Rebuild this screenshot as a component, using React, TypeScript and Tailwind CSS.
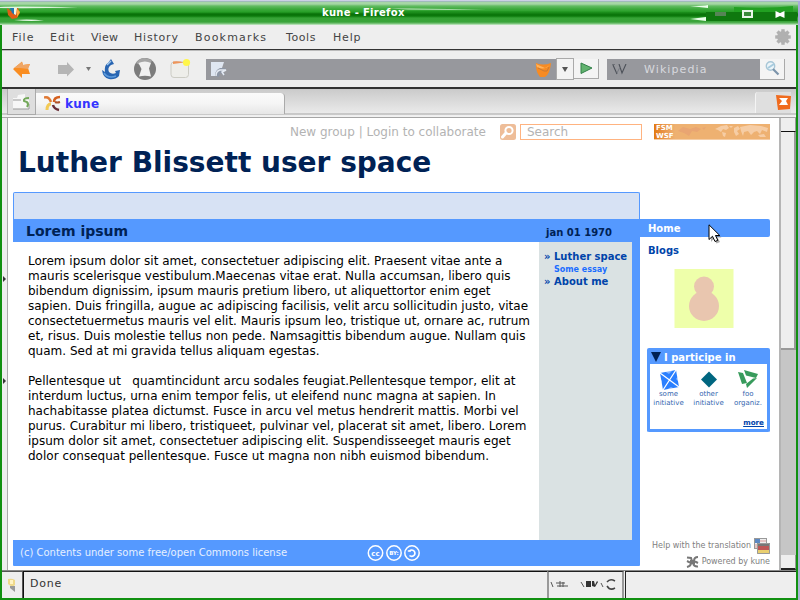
import React from "react";

const paragraphs: string[][] = [
  [
    "Lorem ipsum dolor sit amet, consectetuer adipiscing elit. Praesent vitae ante a",
    "mauris scelerisque vestibulum.Maecenas vitae erat. Nulla accumsan, libero quis",
    "bibendum dignissim, ipsum mauris pretium libero, ut aliquettortor enim eget",
    "sapien. Duis fringilla, augue ac adipiscing facilisis, velit arcu sollicitudin justo, vitae",
    "consectetuermetus mauris vel elit. Mauris ipsum leo, tristique ut, ornare ac, rutrum",
    "et, risus. Duis molestie tellus non pede. Namsagittis bibendum augue. Nullam quis",
    "quam. Sed at mi gravida tellus aliquam egestas.",
  ],
  [
    "Pellentesque ut   quamtincidunt arcu sodales feugiat.Pellentesque tempor, elit at",
    "interdum luctus, urna enim tempor felis, ut eleifend nunc magna at sapien. In",
    "hachabitasse platea dictumst. Fusce in arcu vel metus hendrerit mattis. Morbi vel",
    "purus. Curabitur mi libero, tristiqueet, pulvinar vel, placerat sit amet, libero. Lorem",
    "ipsum dolor sit amet, consectetuer adipiscing elit. Suspendisseeget mauris eget",
    "dolor consequat pellentesque. Fusce ut magna non nibh euismod bibendum.",
  ],
];

function TitleBar() {
  return (
    <div className="relative flex h-[25px] shrink-0 items-center bg-[linear-gradient(to_bottom,#ffffff_0px,#9aa0cf_1px,#a6d6a6_2px,#a6d6a6_4px,#62bb62_6px,#3daa3d_9px,#279f27_12px,#087008_14px,#0c7a0c_16px,#36a436_18px,#3aa43a_22px,#8bcb8b_24px,#d5f0d5_25px)]">
      <svg className="absolute inset-0" width="800" height="25">
        <path d="M0 7Q20 6 78 7.500Q30 8.500 0 8Z" fill="#dff5df" />
        <path d="M14 20Q30 19 44 20.500Q28 21.500 14 20Z" fill="#e9f9e9" />
        <path d="M389 8.500Q440 8 486 10L408 9.500Z" fill="#e2f5e2" opacity=".85" />
        <path d="M404 11L400 14.500H700V12Z" fill="#168616" opacity=".5" />
        <path d="M690 6Q704 6 708 5V8ZM690 19L706 17V21Z" fill="#eaffea" />
        <path d="M706 12H797V21H706Z" fill="#0f780f" />
        <path d="M734 7Q765 9 793 6V12L734 12Z" fill="#22a022" />
        <rect x="715" y="12" width="11" height="4" fill="#568456" />
        <path d="M743 11H752V17H743Z" fill="#398a39" stroke="#e9f5e9" strokeWidth="2" />
        <path d="M775.500 11L780 13L784.500 11V18L780 16L775.500 18Z" fill="#fff" />
        <path d="M7 8L11 11L12 8L18 8L20 13L17 18L12 19L8 15Z" fill="#e05d15" />
        <path d="M10 8L14 8L15 15L12 13Z" fill="#2277ae" />
        <path d="M14 8L17 8L16 15L14 14Z" fill="#f5f5dd" />
        <path d="M17 9L20 12L17 17Z" fill="#f5b13b" />
        <path d="M798 1H800V25H798Z" fill="#aaaadb" />
      </svg>
      <span className="relative ml-[322px] font-['DejaVu_Sans'] text-[10px] font-bold tracking-[0.300px] whitespace-pre text-white">
        kune - Firefox
      </span>
    </div>
  );
}

function MenuBar() {
  const items: [string, string][] = [
    ["File", "w-[38px] tracking-[1px]"],
    ["Edit", "w-[41px] tracking-[1px]"],
    ["View", "w-[43px] tracking-[0.300px]"],
    ["History", "w-[61px] tracking-[0.800px]"],
    ["Bookmarks", "w-[91px] tracking-[1.200px]"],
    ["Tools", "w-[47px] tracking-[0.600px]"],
    ["Help", "w-[40px] tracking-[0.800px]"],
  ];
  return (
    <div className="flex h-[25px] shrink-0 items-center border-b border-[#333] bg-[#eeeeee] pt-[2px] pl-[10px] font-['DejaVu_Sans'] text-[11px] text-[#444]">
      {items.map(([label, style]) => (
        <span key={label} className={"shrink-0 whitespace-nowrap " + style}>
          {label}
        </span>
      ))}
      <svg className="mr-[5px] mb-[2px] ml-auto" width="16" height="16" viewBox="-8 -8 16 16">
        <circle r="5.900" fill="#b0b0b0" />
        {[0, 45, 90, 135].map((a) => (
          <rect key={a} x="-1.700" y="-7.800" width="3.400" height="15.600" fill="#b0b0b0" transform={`rotate(${a})`} />
        ))}
      </svg>
    </div>
  );
}

function ToolBar() {
  return (
    <div className="flex h-[39px] shrink-0 items-center border-t border-b-2 border-t-[#bbb] border-b-[#333] bg-[#eeeeee]">
      <svg className="shrink-0" width="204" height="30" viewBox="2 55 204 30">
        <path d="M13 70L22 62.500L23 66L30 65L28 69L30 75L22 75V79Z" fill="#f98d21" />
        <path d="M14 69L22 63L23 66L30 65L28 70L20 69Z" fill="#efa666" />
        <path d="M58 66H67V63L74 70.500L67 77.500V75H58Z" fill="#b5b5b5" />
        <path d="M86 68H91L88.500 72Z" fill="#777" />
        <path d="M111 60L114 65L111 66Q107 69 109 73Q112 76 116 74L115 72L120 71L119 77Q115 81 109 80Q103 79 102 71L105 73Q104 66 108 64Z" fill="#2865b2" />
        <path d="M104 74Q108 80 116 77" fill="none" stroke="#5d9bdc" strokeWidth="1.500" />
        <path d="M107 66L111 62" fill="none" stroke="#9fc6ea" strokeWidth="1.500" />
        <circle cx="145" cy="70" r="11" fill="#7c7c7c" />
        <path d="M145 59A11 11 0 0 0 136 64L140 66L151 64L152 61Z" fill="#a5a5a5" />
        <path d="M138.500 64Q145 61 151 64L149 69.500L151 77.500Q145 76 139 77.500L141.500 70Z" fill="#f0f0f0" />
        <rect x="171" y="63" width="17.500" height="15.500" rx="3" fill="#eeeeea" stroke="#ccccc4" />
        <path d="M173 62.500Q178 61.500 184 63.500L173 65Z" fill="#ee955a" />
        <circle cx="186.500" cy="63.500" r="3.600" fill="#fff64a" />
      </svg>
      <div className="mt-[1px] flex h-[21px] w-[350px] shrink-0 items-center justify-between bg-[#97989d] pr-[5px] pl-[5px]">
        <svg width="16" height="16" viewBox="0 0 16 16">
          <path d="M0 0H13L11 6L4 14H0Z" fill="#dfe6f1" />
          <path d="M4 14Q4 8 9 6L15 6L12 9L14 14L9 11L8 15Z" fill="#8d96a6" />
          <path d="M5 14Q5 9 9 8L15 8L11 10L13 13" fill="none" stroke="#e5eaf2" strokeWidth="1.500" />
        </svg>
        <svg width="15" height="16" viewBox="0 0 15 16">
          <path d="M0 1Q7 4 15 1Q14 12 9 15H4Q0 10 0 4Z" fill="#f78b23" />
          <path d="M0 2L9 6L14 3Q8 9 1 5Z" fill="#ffb35c" />
          <path d="M2 6L8 9H11L13 5" fill="none" stroke="#c97933" />
        </svg>
      </div>
      <div className="ml-px flex h-[20px] w-[16px] shrink-0 items-center justify-center bg-[#f3f3f3] outline-1 outline-[#aaa]">
        <svg width="6" height="5"><path d="M0 0H6L3 5Z" fill="#555" /></svg>
      </div>
      <div className="ml-px flex h-[20px] w-[25px] shrink-0 items-center justify-center border-r border-b border-[#aaa] bg-[#f4f4f4]">
        <svg width="13" height="13" viewBox="0 0 13 13"><path d="M1 1L12 6L1 11.500Z" fill="#62b36f" stroke="#328049" /></svg>
      </div>
      <div className="mt-[1px] ml-[8px] flex h-[21px] w-[153px] shrink-0 items-center bg-[#97989d]">
        <svg className="ml-[5px]" width="15" height="11" viewBox="0 0 15 11">
          <path d="M0 0H3M1 1L5 10M7 0L10 9L14 0" fill="none" stroke="#4c5058" strokeWidth="1.100" />
          <path d="M5 9L8 3" stroke="#777b83" />
        </svg>
        <span className="mt-[2px] ml-[17px] font-['DejaVu_Sans'] text-[11px] tracking-[1.100px] text-[#d8d9dd]">Wikipedia</span>
      </div>
      <div className="flex h-[21px] w-[25px] shrink-0 items-center justify-center border-r border-b border-[#aaa] bg-[#f4f4f4]">
        <svg width="15" height="15" viewBox="0 0 15 15">
          <circle cx="5.500" cy="5" r="4.200" fill="#edf5f9" stroke="#a8c7d7" strokeWidth="1.400" />
          <path d="M3 7L9 3" stroke="#a7cbde" strokeWidth="2" />
          <path d="M8 8L13.500 13.500" stroke="#7c94ab" strokeWidth="2.200" />
        </svg>
      </div>
    </div>
  );
}

function TabBar() {
  return (
    <div className="flex h-[29px] shrink-0 border-b border-[#a5a5a5] bg-[linear-gradient(to_bottom,#cacaca_0px,#d1d1d1_5px,#eaeaea_24px,#a5a5a5_25px,#eeeeee_26px,#f2f2f2_28px)] pl-[5px]">
      <div className="flex h-[26px] w-[29px] shrink-0 items-center border-r border-b border-l border-[#aaa] bg-[#dedede] pl-[4px]">
        <svg width="19" height="17" viewBox="0 0 19 17">
          <path d="M1 5L5 5L6 2L13 1L13 5L17 7V16H1Z" fill="#f7f7f7" />
          <path d="M1 7H9M1 16H17V11" fill="none" stroke="#999" />
          <path d="M17 5Q11 5 12 8L15 9Q17 11 15 14" fill="none" stroke="#74a85a" strokeWidth="2" />
        </svg>
      </div>
      <div className="mt-[4px] flex h-[21px] w-[249px] shrink-0 items-center rounded-tr-[4px] border-r border-[#aaa] bg-[linear-gradient(to_bottom,#fafafa,#f5f5f5_50%,#e6e6e6)] pl-[8px]">
        <svg width="17" height="17" viewBox="0 0 17 17">
          <path d="M0 2.500Q5 1 7 7" fill="none" stroke="#e07a35" strokeWidth="2.500" />
          <path d="M10 7Q10 2 16 2" fill="none" stroke="#d5601f" strokeWidth="2.500" />
          <path d="M11 7Q13 8 16 7" fill="none" stroke="#b0522a" strokeWidth="2" />
          <path d="M7 9Q3 9 3 15" fill="none" stroke="#f3ca55" strokeWidth="3" />
          <path d="M9 10Q10 14 15 15" fill="none" stroke="#682b35" strokeWidth="2.500" />
        </svg>
        <span className="ml-[4px] font-['DejaVu_Sans'] text-[12px] font-bold tracking-[0.300px] text-[#3434ff]">kune</span>
      </div>
      <div className="mt-[3px] mr-[5px] ml-auto flex h-[21px] w-[36px] items-center justify-end rounded-tl-[3px] border-l border-[#f4f4f4] bg-[#dfdfdf]">
        <svg width="15" height="15" viewBox="0 0 15 15">
          <path d="M0 0L15 1L14 14L2 15Z" fill="#f06b1e" />
          <path d="M3 3H12L10 6L12 10H3L6 6Z" fill="#fff" />
        </svg>
      </div>
    </div>
  );
}

function PageHeader() {
  return (
    <div className="flex h-[74px] shrink-0 flex-col">
      <div className="flex h-[28px] items-center">
        <span className="ml-[282px] w-[210px] shrink-0 pb-px text-[12px] leading-[14px] whitespace-nowrap text-[#b3b3b3]">
          New group | Login to collaborate
        </span>
        <svg className="shrink-0" width="16" height="16" viewBox="0 0 16 16">
          <rect width="16" height="16" rx="2.500" fill="#eebd98" />
          <circle cx="9" cy="6.500" r="3.600" fill="none" stroke="#fff" strokeWidth="2" />
          <path d="M6 9L2.500 13" stroke="#fff" strokeWidth="3" strokeLinecap="round" />
        </svg>
        <div className="ml-[4px] flex h-[16px] w-[122px] shrink-0 items-center border border-[#ffb380] pl-[6px] text-[12px] text-[#b3b3b3]">
          Search
        </div>
        <div className="ml-[12px] flex h-[16px] w-[116px] shrink-0 border-b border-[#f5cda5] bg-[#eeb171]">
          <div className="w-[21px] bg-gradient-to-r from-[#e37b0b] to-[#eeb171] pl-[2px] text-[7px] leading-[8px] font-bold text-white">
            FSM
            <br />
            WSF
          </div>
          <svg width="95" height="15" viewBox="0 0 95 15">
            <path d="M3 7L8 3L15 5L21 3L26 5L22 8L17 7L14 12L9 9ZM27 4L31 3L29 6Z" fill="#e9a572" />
            <path d="M40 5L46 2L52 1L54 4L51 6L48 5L46 8L43 6ZM47 8L51 9L50 13L48 12ZM54 2L58 2L56 4ZM59 4L63 2L65 5L62 7L64 10L61 12L59 8ZM65 3L75 1L86 2L93 4L92 8L87 6L85 10L82 7L79 8L76 11L73 7L69 8L68 12L66 7ZM83 11L89 10L91 13L85 13Z" fill="#f6cda5" />
          </svg>
        </div>
      </div>
      <h1 className="mt-px ml-[10px] text-[28px] leading-[32px] font-bold whitespace-nowrap text-[#002255]">
        Luther Blissett user space
      </h1>
    </div>
  );
}

function CcBadges() {
  return (
    <svg width="54" height="18" viewBox="0 0 54 18" fontFamily="DejaVu Sans" fontWeight="bold">
      {[8.5, 27, 45].map((x) => (
        <circle key={x} cx={x} cy="9" r="7.200" fill="none" stroke="#fff" strokeWidth="1.500" />
      ))}
      <text x="8.500" y="11.500" fontSize="7" fill="#fff" textAnchor="middle">cc</text>
      <text x="27" y="11" fontSize="5.500" fill="#fff" textAnchor="middle">BY:</text>
      <path d="M42 7.500A3.200 3.200 0 1 1 42.500 11.500M40.800 7H44" fill="none" stroke="#fff" strokeWidth="1.700" />
    </svg>
  );
}

function MainPanel() {
  return (
    <main className="flex h-[374px] w-[627px] shrink-0 flex-col">
      <div className="h-[27px] shrink-0 rounded-t-[2px] border border-b-0 border-[#5599ff] bg-[#d7e2f4]" />
      <div className="flex h-[23px] shrink-0 items-center bg-[#5599ff] pt-[2px] pl-[13px] font-bold text-[#002255]">
        <h2 className="w-[520px] text-[14px]">Lorem ipsum</h2>
        <span className="pt-[1px] text-[10px] whitespace-nowrap">jan 01 1970</span>
      </div>
      <div className="flex h-[298px] shrink-0">
        <article className="w-[526px] shrink-0 pt-[12px] pl-[15px] text-[12px] leading-[15px] text-black">
          {paragraphs.map((lines, i) => (
            <p key={i} className="mb-[15px]">
              {lines.map((line) => (
                <span key={line} className="block whitespace-pre">{line}</span>
              ))}
            </p>
          ))}
        </article>
        <nav className="w-[93px] shrink-0 bg-[#dae2e3] pt-[8px] pl-[5px] text-[10px] leading-[14px] font-bold whitespace-nowrap text-[#0044aa]">
          <div className="flex"><span className="w-[10px] shrink-0">»</span>Luther space</div>
          <div className="pl-[10px] text-[8px] leading-[11px] text-[#1a6dff]">Some essay</div>
          <div className="flex"><span className="w-[10px] shrink-0">»</span>About me</div>
        </nav>
        <div className="w-[8px] bg-[#5599ff]" />
      </div>
      <footer className="flex h-[26px] shrink-0 items-center rounded-b-[1px] bg-[#5599ff] pb-px pl-[7px] text-[10px] text-[#e6f0ff]">
        <span className="w-[347px] shrink-0">(c) Contents under some free/open Commons license</span>
        <CcBadges />
      </footer>
    </main>
  );
}

function Participation() {
  return (
    <section className="mt-[20px] ml-[7px] flex h-[84px] w-[123px] shrink-0 flex-col rounded-[2px] border-[3px] border-t-0 border-[#5599ff] bg-white text-[#0044aa]">
      <header className="flex h-[16px] shrink-0 items-center bg-[#5599ff] pt-[2px] pl-px text-[10px] font-bold whitespace-nowrap text-white">
        <svg className="mr-[3px]" width="10" height="10"><path d="M0 0H10L5 10Z" fill="#002255" /></svg>
        I participe in
      </header>
      <div className="flex pt-[6px] text-center text-[7px] leading-[8.500px] text-[#3466af]">
        <div className="flex w-[37px] flex-col items-center">
          <svg width="20" height="20" viewBox="0 0 20 20">
            <path d="M1 3L17 0L20 17L4 20Z" fill="#2a7fff" />
            <path d="M1 3L20 17M17 0L4 20" stroke="#fff" strokeWidth="1.200" />
            <path d="M5 1L10 4L14 0ZM0 8L3 11L2 16ZM20 5L17 9L20 12ZM7 20L12 17L16 19Z" fill="#fff" opacity=".4" />
          </svg>
          <span>some<br />initiative</span>
        </div>
        <div className="flex w-[43px] flex-col items-center">
          <svg width="20" height="20" viewBox="0 0 20 20"><path d="M10 1.500L18 9.500L10 17.500L2 9.500Z" fill="#006680" /></svg>
          <span>other<br />initiative</span>
        </div>
        <div className="flex w-[36px] flex-col items-center">
          <svg width="20" height="20" viewBox="0 0 20 20">
            <path d="M0 2L5 3L9 13L4 14ZM6 0L20 4L18 8L8 5.500ZM15 8.500L19 8L9 18L8 14Z" fill="#389b5c" />
          </svg>
          <span>foo<br />organiz.</span>
        </div>
      </div>
      <a className="mt-[11px] mr-[3px] self-end text-[7.200px] leading-[10px] font-bold underline">more</a>
    </section>
  );
}

function SideColumn() {
  return (
    <aside className="flex w-[130px] shrink-0 flex-col pt-[27px]">
      <div className="relative flex h-[18px] shrink-0 items-center rounded-r-[2px] bg-[#5599ff] pl-[8px] text-[10px] font-bold text-white">
        Home
        <svg className="absolute top-[5px] left-[68px]" width="15" height="20" viewBox="0 0 15 20">
          <path d="M3 3V18L6 14.500L8.500 19.500L12 18L9.500 13.500H13.500Z" fill="#777" opacity=".6" />
          <path d="M1 .8V15.500L4.500 12.300L7 17.500L9.800 16.300L7.500 11.500H11.800Z" fill="#fff" stroke="#000" />
        </svg>
      </div>
      <div className="mt-[5px] mb-px h-[16px] shrink-0 pl-[8px] text-[10px] leading-[17px] font-bold text-[#0044aa]">Blogs</div>
      <svg className="mt-[10px] ml-[34px] shrink-0" width="60" height="59" viewBox="0 0 60 59">
        <rect x=".5" width="59" height="59" fill="#eeffaa" />
        <circle cx="30" cy="17.500" r="10" fill="#e9c6af" />
        <circle cx="30" cy="37" r="15" fill="#e9c6af" />
      </svg>
      <Participation />
      <div className="mt-[106px] flex h-[16px] shrink-0 items-center justify-end text-[8px] whitespace-nowrap text-[#808080]">
        Help with the translation
        <svg className="ml-[3px]" width="16" height="16" viewBox="0 0 16 16">
          <rect x=".5" y=".5" width="12" height="10" fill="#eee" stroke="#999" />
          <path d="M1 1H6V5H1Z" fill="#5c88c3" />
          <path d="M6 3H12M1 7H12M1 9H12" stroke="#d99" />
          <path d="M3 5H16V8H3Z" fill="#777" />
          <path d="M3 8H16V12H3Z" fill="#be5656" />
          <path d="M3 12H16V16H3Z" fill="#e9cf70" />
          <path d="M3.500 5.500H15.500V15.500H3.500Z" fill="none" stroke="#999" />
        </svg>
      </div>
      <div className="flex h-[16px] shrink-0 items-center justify-end text-[8px] whitespace-nowrap text-[#808080]">
        <svg className="mr-[3px]" width="13" height="12" viewBox="0 0 13 12">
          <path d="M1 1.500L5 2L6 5M12 1Q8 1 8 5L12 7M1 11Q5 10 5 7L1 5M7 7Q8 11 12 10.500" fill="none" stroke="#777" strokeWidth="2" />
          <path d="M4 4H9V8H4Z" fill="#777" />
        </svg>
        Powered by kune
      </div>
    </aside>
  );
}

function ScrollBar() {
  return (
    <div className="ml-auto flex w-[17px] shrink-0 flex-col border-l-2 border-[#b5b5b5] bg-[#c6c6c6]">
      <div className="h-[14px] shrink-0 border-r border-b border-[#111] border-r-[#999] bg-[#eee]" />
      <div className="h-[218px] shrink-0 border-r-2 border-b-2 border-[#999] bg-[#eeeeee]" />
      <div className="mt-auto h-[15px] shrink-0 border-r border-b-2 border-[#222] border-r-[#999] bg-[#eee]" />
    </div>
  );
}

function StatusBar() {
  return (
    <div className="flex h-[28px] shrink-0 border-t border-[#888] bg-[#eeeeee] font-['DejaVu_Sans'] text-[10px] text-[#333]">
      <div className="flex w-[21px] shrink-0 items-center justify-center border-t border-r border-[#555]">
        <svg width="10" height="15" viewBox="0 0 10 15">
          <path d="M1 1Q5 0 8 2V7L5 9L1 6Z" fill="#efd98a" />
          <path d="M3 2H6V6H3Z" fill="#fff3c4" />
          <path d="M3 8L8 8L8 14L3 10Z" fill="#999" />
        </svg>
      </div>
      <div className="flex w-[524px] shrink-0 items-center border-t border-l border-[#111] pb-[1px] pl-[6px] text-[11px] tracking-[0.800px]">Done</div>
      <div className="flex w-[77px] shrink-0 items-center border-t border-r-2 border-l-2 border-[#999] border-t-[#222] pb-[2px] pl-px">
        <svg width="66" height="13" viewBox="0 0 66 13">
          <path d="M1 4L3 9M6 5H15M7 8H18M10 3V9M13 4V9M31 4L34 9M51 5L53 9" fill="none" stroke="#555" />
          <path d="M36 3H41V9H36ZM42 3H44L45 7L47 3L48 4L45 9L42 8Z" fill="#333" />
          <path d="M57 4Q60 0 65 3M57 8Q60 13 65 10" fill="none" stroke="#444" strokeWidth="1.500" />
        </svg>
      </div>
      <div className="ml-px grow border-t border-l border-[#222]" />
    </div>
  );
}

export default function App() {
  return (
    <div className="flex h-[600px] w-[800px] flex-col overflow-hidden bg-white font-['DejaVu_Sans',sans-serif]">
      <TitleBar />
      <div className="flex h-[575px] shrink-0 border-r-2 border-[#aab4d4]">
        <div className="flex w-[798px] shrink-0 flex-col border-r-2 border-b-2 border-l-2 border-[#119011]">
          <MenuBar />
          <ToolBar />
          <TabBar />
          <div className="flex h-[452px] shrink-0">
            <div className="flex w-[6px] shrink-0 flex-col border-r border-[#aaa] bg-[#eeeeee] pt-[157px]">
              <svg width="4" height="8"><path d="M1 1L4 4L1 7Z" fill="#333" /></svg>
              <svg className="mt-[94px]" width="4" height="8"><path d="M1 1L4 4L1 7Z" fill="#333" /></svg>
            </div>
            <div className="flex w-[771px] shrink-0 flex-col bg-white">
              <PageHeader />
              <div className="flex pl-[5px]">
                <MainPanel />
                <SideColumn />
              </div>
            </div>
            <ScrollBar />
          </div>
          <StatusBar />
        </div>
      </div>
    </div>
  );
}
